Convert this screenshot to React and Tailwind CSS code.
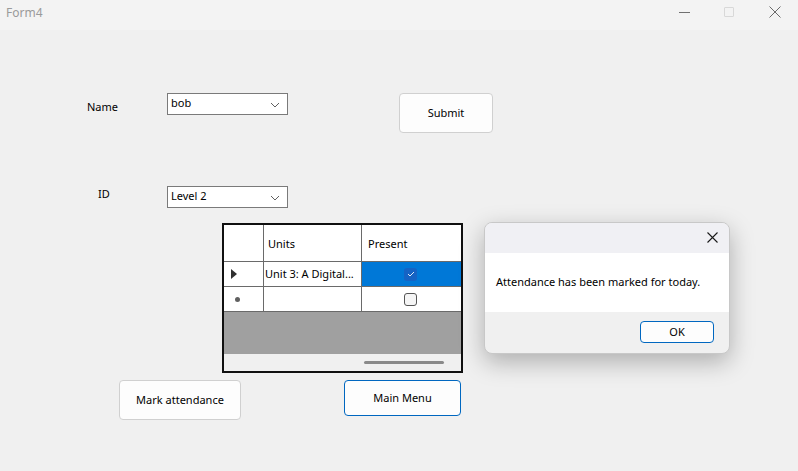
import React from 'react';

const font = { fontFamily: '"Segoe UI", "Noto Sans", "Open Sans", sans-serif' };

const Chevron = () => (
  <svg width="10" height="6" viewBox="0 0 10 6" className="absolute right-[7px] top-[8px]">
    <path d="M1 1 L5 5 L9 1" fill="none" stroke="#606060" strokeWidth="1" />
  </svg>
);

const Combo = ({ value, className }) => (
  <div className={`absolute h-[22px] w-[121px] border border-[#7a7a7a] bg-white text-[11px] leading-[18px] text-black pl-[3px] ${className}`}>
    {value}
    <Chevron />
  </div>
);

const Btn = ({ children, className, accent }) => (
  <button
    className={`absolute flex items-center justify-center rounded-[4px] border bg-[#fdfdfd] text-[11px] text-black ${accent ? 'border-[#0067c0]' : 'border-[#d0d0d0]'} ${className}`}
  >
    {children}
  </button>
);

const Grid = () => (
  <div className="absolute left-[222px] top-[223px] flex h-[150px] w-[241px] flex-col border-2 border-[#101010] bg-[#a0a0a0] text-[11px] text-black">
    {/* header */}
    <div className="flex h-[37px] border-b border-[#6a6a6a] bg-white">
      <div className="w-[40px] border-r border-[#6a6a6a]" />
      <div className="flex w-[98px] items-center border-r border-[#6a6a6a] pl-[4px] pt-[2px]">Units</div>
      <div className="flex w-[99px] items-center pl-[6px] pt-[2px]">Present</div>
    </div>
    {/* row 1 */}
    <div className="flex h-[25px] border-b border-[#6a6a6a] bg-white">
      <div className="flex w-[40px] items-center border-r border-[#6a6a6a] pl-[7px]">
        <svg width="6" height="10" viewBox="0 0 6 10"><path d="M0 0 L6 5 L0 10 Z" fill="#303030" /></svg>
      </div>
      <div className="flex w-[98px] items-center overflow-hidden whitespace-nowrap border-r border-[#6a6a6a] pl-[1px]">Unit 3: A Digital...</div>
      <div className="flex w-[99px] items-center justify-center bg-[#0078d7] pr-[2px]">
        <div className="flex h-[13px] w-[13px] items-center justify-center rounded-[3px] bg-[#1563c4]">
          <svg width="8" height="6" viewBox="0 0 8 6"><path d="M1 3 L3 5 L7 1" fill="none" stroke="#dfe9f6" strokeWidth="1" /></svg>
        </div>
      </div>
    </div>
    {/* row 2 */}
    <div className="flex h-[25px] border-b border-[#6a6a6a] bg-white">
      <div className="flex w-[40px] items-center border-r border-[#6a6a6a] pl-[11px]">
        <div className="h-[5px] w-[5px] rounded-full bg-[#606060]" />
      </div>
      <div className="w-[98px] border-r border-[#6a6a6a]" />
      <div className="flex w-[99px] items-center justify-center pr-[2px]">
        <div className="h-[13px] w-[13px] rounded-[3px] border border-[#555] bg-[#f5f5f5]" />
      </div>
    </div>
    <div className="flex-1" />
    {/* horizontal scrollbar */}
    <div className="relative h-[17px] bg-[#f0f0f0]">
      <div className="absolute left-[140px] top-[7px] h-[3px] w-[80px] rounded-full bg-[#8a8a8a]" />
    </div>
  </div>
);

const Dialog = () => (
  <div className="absolute left-[484px] top-[222px] flex h-[132px] w-[246px] flex-col overflow-hidden rounded-[8px] border border-[#c8c8c8] bg-[#f0f0f0] shadow-[0_8px_24px_rgba(0,0,0,0.28)]">
    <div className="relative h-[30px] bg-[#f0f0f4]">
      <svg width="11" height="11" viewBox="0 0 11 11" className="absolute right-[11px] top-[9px]">
        <path d="M0.5 0.5 L10.5 10.5 M10.5 0.5 L0.5 10.5" stroke="#1a1a1a" strokeWidth="1.1" />
      </svg>
    </div>
    <div className="flex h-[59px] items-center bg-white pl-[11px] text-[11px] text-black">
      Attendance has been marked for today.
    </div>
    <div className="relative flex-1">
      <button className="absolute left-[155px] top-[9px] flex h-[22px] w-[74px] items-center justify-center rounded-[4px] border border-[#0067c0] bg-[#fdfdfd] text-[11px] text-black">
        OK
      </button>
    </div>
  </div>
);

export default function App() {
  return (
    <div className="relative h-[471px] w-[798px] overflow-hidden bg-[#f0f0f0]" style={font}>
      {/* title bar */}
      <div className="relative h-[30px] bg-[#f3f3f3]">
        <span className="absolute left-[6px] top-[4px] text-[12px] text-[#9a9a9a]">Form4</span>
        <svg width="11" height="2" viewBox="0 0 11 2" className="absolute left-[679px] top-[12px]">
          <path d="M0 0.5 L11 0.5" stroke="#707070" strokeWidth="1" />
        </svg>
        <div className="absolute left-[724px] top-[7px] h-[10px] w-[10px] rounded-[1px] border border-[#d8d8d8]" />
        <svg width="12" height="12" viewBox="0 0 12 12" className="absolute left-[769px] top-[6px]">
          <path d="M0.5 0.5 L11.5 11.5 M11.5 0.5 L0.5 11.5" stroke="#6a6a6a" strokeWidth="1" />
        </svg>
      </div>

      <span className="absolute left-[87px] top-[99px] text-[11px] text-black">Name</span>
      <Combo value="bob" className="left-[167px] top-[93px]" />
      <Btn className="left-[399px] top-[93px] h-[40px] w-[94px]">Submit</Btn>

      <span className="absolute left-[98px] top-[186px] text-[11px] text-black">ID</span>
      <Combo value="Level 2" className="left-[167px] top-[186px]" />

      <Grid />

      <Btn className="left-[119px] top-[380px] h-[40px] w-[122px]">Mark attendance</Btn>
      <Btn accent className="left-[344px] top-[380px] h-[36px] w-[117px]">Main Menu</Btn>

      <Dialog />
    </div>
  );
}
